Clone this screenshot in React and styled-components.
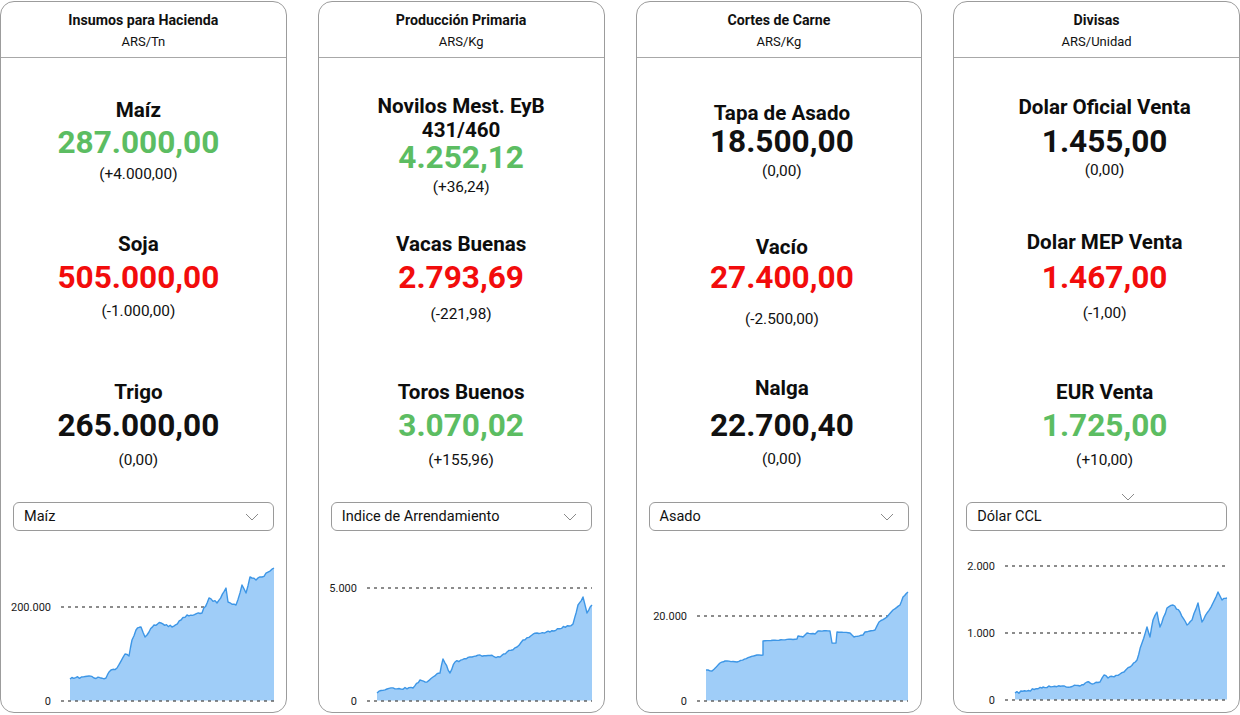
import React from "react";
import styled, { createGlobalStyle } from "styled-components";

const GREEN = "#5cbd62";
const RED = "#f20c0c";
const BLACK = "#111";

const cards = [
  {
    title: "Insumos para Hacienda",
    unit: "ARS/Tn",
    shift: -5,
    items: [
      { label: ["Maíz"], value: "287.000,00", change: "(+4.000,00)", tone: GREEN, y: [110, 143, 174] },
      { label: ["Soja"], value: "505.000,00", change: "(-1.000,00)", tone: RED, y: [244, 278, 311] },
      { label: ["Trigo"], value: "265.000,00", change: "(0,00)", tone: BLACK, y: [392, 426, 460] },
    ],
    select: "Maíz",
    chart: {
      ox: 2,
      from: 62,
      to: 275,
      jitter: 1.2,
      seed: 11,
      ticks: [{ label: "200.000", y: 607 }, { label: "0", y: 701 }],
      points: [
        [71, 679], [90, 676], [95, 678], [107, 678], [110, 672], [118, 668], [126, 654], [130, 656],
        [133, 640], [137, 630], [142, 627], [146, 637], [150, 632], [155, 625], [162, 623], [173, 627],
        [182, 620], [188, 615], [203, 613], [210, 598], [218, 603], [227, 588], [229, 602], [237, 605],
        [243, 585], [247, 593], [251, 577], [257, 580], [263, 577], [275, 568],
      ],
    },
  },
  {
    title: "Producción Primaria",
    unit: "ARS/Kg",
    shift: 0,
    items: [
      { label: ["Novilos Mest. EyB", "431/460"], value: "4.252,12", change: "(+36,24)", tone: GREEN, y: [106, 158, 187] },
      { label: ["Vacas Buenas"], value: "2.793,69", change: "(-221,98)", tone: RED, y: [244, 278, 314] },
      { label: ["Toros Buenos"], value: "3.070,02", change: "(+155,96)", tone: GREEN, y: [392, 426, 460] },
    ],
    select: "Indice de Arrendamiento",
    chart: {
      ox: 319,
      from: 367,
      to: 592,
      jitter: 1.0,
      seed: 23,
      ticks: [{ label: "5.000", y: 588 }, { label: "0", y: 701 }],
      points: [
        [377, 693], [387, 689], [413, 688], [420, 680], [427, 682], [433, 677], [440, 673], [443, 659],
        [450, 673], [455, 662], [470, 657], [480, 655], [500, 657], [507, 652], [517, 647], [523, 640],
        [537, 633], [550, 632], [573, 624], [578, 605], [583, 597], [587, 613], [592, 605],
      ],
    },
  },
  {
    title: "Cortes de Carne",
    unit: "ARS/Kg",
    shift: 3,
    items: [
      { label: ["Tapa de Asado"], value: "18.500,00", change: "(0,00)", tone: BLACK, y: [113, 142, 171] },
      { label: ["Vacío"], value: "27.400,00", change: "(-2.500,00)", tone: RED, y: [247, 278, 319] },
      { label: ["Nalga"], value: "22.700,40", change: "(0,00)", tone: BLACK, y: [388, 426, 459] },
    ],
    select: "Asado",
    chart: {
      ox: 637,
      from: 697,
      to: 908,
      jitter: 0.3,
      seed: 37,
      ticks: [{ label: "20.000", y: 616 }, { label: "0", y: 701 }],
      points: [
        [706, 670], [712, 671], [720, 663], [725, 661], [737, 662], [750, 657], [757, 655], [763, 655],
        [763, 641], [797, 639], [798, 636], [803, 637], [807, 633], [815, 634], [818, 631], [830, 631],
        [832, 643], [836, 643], [837, 632], [850, 633], [854, 637], [863, 635], [865, 632], [875, 630],
        [879, 622], [887, 617], [893, 610], [900, 605], [903, 597], [908, 592],
      ],
    },
  },
  {
    title: "Divisas",
    unit: "ARS/Unidad",
    shift: 8,
    items: [
      { label: ["Dolar Oficial Venta"], value: "1.455,00", change: "(0,00)", tone: BLACK, y: [107, 142, 170] },
      { label: ["Dolar MEP Venta"], value: "1.467,00", change: "(-1,00)", tone: RED, y: [242, 278, 313] },
      { label: ["EUR Venta"], value: "1.725,00", change: "(+10,00)", tone: GREEN, y: [392, 426, 460] },
    ],
    select: "Dólar CCL",
    chevronAbove: true,
    chart: {
      ox: 954,
      from: 1005,
      to: 1227,
      jitter: 1.0,
      seed: 53,
      ticks: [{ label: "2.000", y: 566 }, { label: "1.000", y: 633 }, { label: "0", y: 700 }],
      points: [
        [1015, 693], [1042, 688], [1043, 687], [1080, 686], [1087, 682], [1092, 684], [1100, 682],
        [1104, 675], [1108, 678], [1120, 674], [1130, 667], [1137, 660], [1142, 643], [1147, 627],
        [1150, 637], [1153, 620], [1157, 612], [1160, 627], [1167, 608], [1173, 605], [1180, 612],
        [1187, 625], [1192, 620], [1198, 603], [1202, 622], [1207, 613], [1213, 603], [1218, 592],
        [1222, 600], [1227, 598],
      ],
    },
  },
];

const CHART_TOP = 535;
const ITEMS_TOP = 58;

const GlobalStyle = createGlobalStyle`
  html, body {
    margin: 0;
    padding: 0;
    background: #fff;
  }
  body {
    font-family: Roboto, "Liberation Sans", Arial, sans-serif;
    color: #111;
  }
`;

const Board = styled.main`
  width: 1240px;
  box-sizing: border-box;
  padding: 1px 0 0 0;
  display: grid;
  grid-template-columns: repeat(4, 1fr);
  column-gap: 31px;
`;

const Card = styled.section`
  height: 712px;
  box-sizing: border-box;
  border: 1px solid #9c9c9c;
  border-radius: 14px;
  display: flex;
  flex-direction: column;
  overflow: hidden;
`;

const Header = styled.header`
  padding: 10px 0 7px;
  border-bottom: 1px solid #a8a8a8;
  text-align: center;
`;

const Title = styled.div`
  font-size: 14.2px;
  font-weight: 700;
  line-height: 16px;
`;

const Unit = styled.div`
  margin-top: 6px;
  font-size: 13px;
  line-height: 16px;
`;

const Items = styled.div`
  height: 440px;
  box-sizing: border-box;
  padding-left: ${(p) => Math.max(0, p.$shift * 2)}px;
  padding-right: ${(p) => Math.max(0, -p.$shift * 2)}px;
  display: flex;
  flex-direction: column;
  align-items: center;
  text-align: center;
`;

const Item = styled.div`
  margin-top: ${(p) => p.$mt}px;
  display: flex;
  flex-direction: column;
  align-items: center;
`;

const Label = styled.div`
  font-size: 20.6px;
  font-weight: 700;
  line-height: 24px;
  color: #0d0d0d;
  white-space: nowrap;
`;

const Value = styled.div`
  margin-top: ${(p) => p.$mt}px;
  font-size: 31.6px;
  font-weight: 700;
  line-height: 32px;
  color: ${(p) => p.$tone};
`;

const Change = styled.div`
  margin-top: ${(p) => p.$mt}px;
  font-size: 15.4px;
  line-height: 18px;
  color: #111;
`;

const SelectRow = styled.div`
  position: relative;
  padding: 4px 12px 0;
`;

const Select = styled.div`
  height: 29px;
  box-sizing: border-box;
  border: 1px solid #9a9a9a;
  border-radius: 6px;
  padding: 0 14px 0 10px;
  display: flex;
  align-items: center;
  justify-content: space-between;
  font-size: 14.5px;
  color: #111;
`;

const FloatingChevron = styled.span`
  position: absolute;
  top: -5px;
  left: 167px;
  display: flex;
`;

const ChartBox = styled.svg`
  display: block;
  margin-top: 4px;
  width: 100%;
  height: 177px;
`;

const Chevron = () => (
  <svg width="14" height="8" viewBox="0 0 14 8">
    <polyline points="1,1 7,7 13,1" fill="none" stroke="#8a8a8a" strokeWidth="1" />
  </svg>
);

const rng = (seed) => () => {
  seed = (seed * 16807) % 2147483647;
  return (seed - 1) / 2147483646;
};

function buildLine({ points, ox, jitter, seed }) {
  const rand = rng(seed);
  const out = [];
  for (let i = 0; i < points.length - 1; i++) {
    const [x1, y1] = points[i];
    const [x2, y2] = points[i + 1];
    const steps = Math.max(1, Math.round((x2 - x1) / 2));
    for (let s = 0; s < steps; s++) {
      const t = s / steps;
      let y = y1 + (y2 - y1) * t;
      if (s > 0) y += (rand() - 0.5) * 2 * jitter;
      out.push([x1 + (x2 - x1) * t - ox, y - CHART_TOP]);
    }
  }
  const last = points[points.length - 1];
  out.push([last[0] - ox, last[1] - CHART_TOP]);
  return out;
}

function Chart({ chart }) {
  const line = buildLine(chart);
  const zero = chart.ticks[chart.ticks.length - 1];
  const base = zero.y - CHART_TOP - 0.5;
  const stroke = line.map(([x, y]) => `${x.toFixed(1)},${y.toFixed(1)}`).join(" ");
  const area = `M${line[0][0]},${base} L${stroke.replace(/ /g, " L")} L${line[line.length - 1][0]},${base} Z`;
  const x1 = chart.from - chart.ox;
  const x2 = chart.to - chart.ox;

  const gridLine = (t) => (
    <line
      key={t.label}
      x1={x1}
      x2={x2}
      y1={t.y - CHART_TOP}
      y2={t.y - CHART_TOP}
      stroke="#1a1a1a"
      strokeWidth="1.2"
      strokeDasharray="3 4"
    />
  );

  return (
    <ChartBox>
      {chart.ticks.slice(0, -1).map(gridLine)}
      <path d={area} fill="#9fcdf8" />
      <polyline points={stroke} fill="none" stroke="#3d96e6" strokeWidth="1.4" strokeLinejoin="round" />
      {gridLine(zero)}
      {chart.ticks.map((t) => (
        <text
          key={"l" + t.label}
          x={x1 - 10}
          y={t.y - CHART_TOP + 4}
          textAnchor="end"
          fontSize="11"
          fontFamily="Roboto, 'Liberation Sans', sans-serif"
          fill="#1a1a1a"
        >
          {t.label}
        </text>
      ))}
    </ChartBox>
  );
}

function PriceCard({ card }) {
  let prevBottom = ITEMS_TOP;
  const rows = card.items.map((it) => {
    const [L, V, C] = it.y;
    const lastLabel = L + 24 * (it.label.length - 1);
    const row = {
      ...it,
      mt: L - 12 - prevBottom,
      valueMt: V - lastLabel - 12 - 16,
      changeMt: C - V - 16 - 9,
    };
    prevBottom = C + 9;
    return row;
  });

  return (
    <Card>
      <Header>
        <Title>{card.title}</Title>
        <Unit>{card.unit}</Unit>
      </Header>
      <Items $shift={card.shift}>
        {rows.map((r) => (
          <Item key={r.value} $mt={r.mt}>
            {r.label.map((l) => (
              <Label key={l}>{l}</Label>
            ))}
            <Value $mt={r.valueMt} $tone={r.tone}>
              {r.value}
            </Value>
            <Change $mt={r.changeMt}>{r.change}</Change>
          </Item>
        ))}
      </Items>
      <SelectRow>
        {card.chevronAbove && (
          <FloatingChevron>
            <Chevron />
          </FloatingChevron>
        )}
        <Select>
          <span>{card.select}</span>
          {!card.chevronAbove && <Chevron />}
        </Select>
      </SelectRow>
      <Chart chart={card.chart} />
    </Card>
  );
}

export default function App() {
  return (
    <>
      <GlobalStyle />
      <Board>
        {cards.map((c) => (
          <PriceCard key={c.title} card={c} />
        ))}
      </Board>
    </>
  );
}
